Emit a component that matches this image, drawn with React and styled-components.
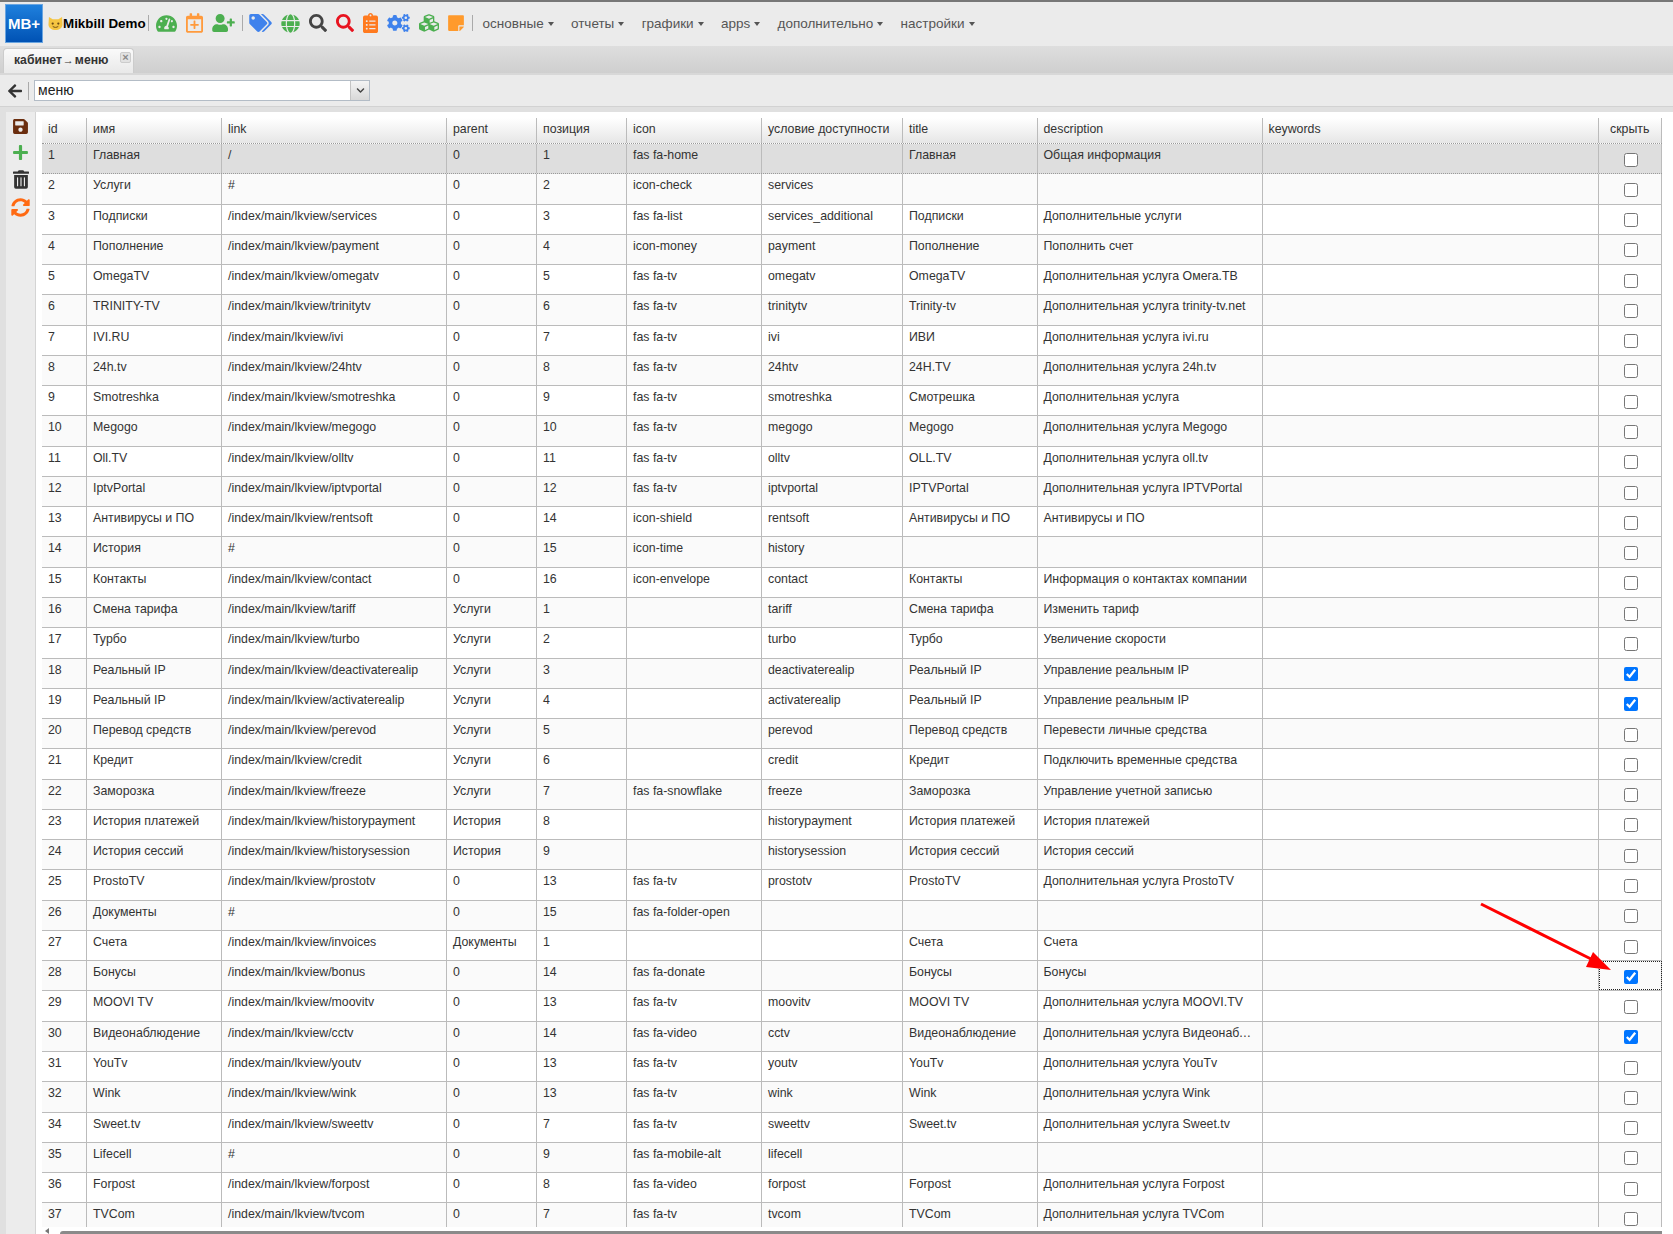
import styled, { createGlobalStyle } from 'styled-components';
import {
    FaArrowLeft,
    FaChevronDown,
    FaClipboardList,
    FaCogs,
    FaCubes,
    FaGlobe,
    FaPlus,
    FaRegCalendarPlus,
    FaSave,
    FaSearch,
    FaStickyNote,
    FaSyncAlt,
    FaTachometerAlt,
    FaTags,
    FaTrashAlt,
    FaUserPlus,
} from 'react-icons/fa';

const GlobalStyle = createGlobalStyle`
    html, body {
        margin: 0;
        padding: 0;
        height: 100%;
        overflow: hidden;
        background: #fff;
    }
    body {
        font-family: "Liberation Sans", Arial, sans-serif;
        font-size: 12.35px;
        color: #333;
    }
`;

const COLUMNS = '45px 135px 225px 90px 90px 135px 141px 134.5px 225px 336.5px 63px';

const Page = styled.div`
    position: relative;
    display: flex;
    flex-direction: column;
    height: 1234px;
    overflow: hidden;
`;

const TopBar = styled.div`
    display: flex;
    align-items: center;
    flex: none;
    box-sizing: border-box;
    height: 46px;
    padding: 0 0 2px 5px;
    background: #ebebeb;
    border-top: 2px solid #777;
`;

const Logo = styled.div`
    display: flex;
    align-items: center;
    justify-content: center;
    box-sizing: border-box;
    width: 38px;
    height: 39px;
    margin-right: 5px;
    background: linear-gradient(#1f80dd, #0052b4);
    border: 1px solid #6aa5e0;
    color: #fff;
    font-size: 15px;
    font-weight: bold;
`;

const Brand = styled.span`
    margin: 0 2px 0 0;
    color: #000;
    font-size: 13.4px;
    font-weight: bold;
    white-space: nowrap;
`;

const Separator = styled.span`
    flex: none;
    width: 1px;
    height: ${(p) => p.$height || 16}px;
    margin: 0 ${(p) => p.$gap || 0}px;
    background: #aaa;
`;

const IconGroup = styled.div`
    display: flex;
    align-items: center;
    gap: 9px;
    margin: 0 ${(p) => p.$right}px 0 ${(p) => p.$left}px;
`;

const BarIcon = styled.span`
    display: flex;
    flex: none;
    color: ${(p) => p.$color};
    svg {
        flex: none;
        width: ${(p) => p.$width}px;
        height: ${(p) => p.$height}px;
    }
`;

const Menu = styled.nav`
    display: flex;
    gap: 17.3px;
    margin-left: 10px;
`;

const MenuItem = styled.span`
    display: flex;
    align-items: center;
    gap: 4px;
    color: #555;
    font-size: 13.5px;
    &::after {
        content: '';
        border-top: 4px solid #555;
        border-left: 3px solid transparent;
        border-right: 3px solid transparent;
        margin-top: 2px;
    }
`;

const TabStrip = styled.div`
    display: flex;
    align-items: flex-end;
    flex: none;
    height: 27px;
    padding-left: 3px;
    background: linear-gradient(#dedede, #cfcfcf);
`;

const Tab = styled.div`
    position: relative;
    box-sizing: border-box;
    width: 131px;
    height: 25px;
    padding: 4px 0 0 10px;
    background: linear-gradient(#fafafa, #e9e9e9);
    border: 1px solid #ccc;
    border-bottom: 0;
    border-radius: 4px 4px 0 0;
    color: #333;
    font-size: 12.2px;
    font-weight: bold;
`;

const TabArrow = styled.span`
    margin: 0 1px;
    font-size: 11px;
    font-weight: normal;
`;

const TabClose = styled.span`
    position: absolute;
    top: 3px;
    right: 2px;
    display: flex;
    align-items: center;
    justify-content: center;
    box-sizing: border-box;
    width: 11px;
    height: 11px;
    background: #e2e2e2;
    border: 1px solid #ccc;
    border-radius: 2px;
    color: #888;
    font-size: 11px;
    line-height: 1;
`;

const Toolbar = styled.div`
    display: flex;
    align-items: center;
    flex: none;
    box-sizing: border-box;
    height: 34px;
    padding-left: 7px;
    background: #ebebeb;
    border-top: 2px solid #d8d8d8;
    border-bottom: 1px solid #d2d2d2;
`;

const Select = styled.div`
    display: flex;
    align-items: stretch;
    box-sizing: border-box;
    width: 336px;
    height: 21px;
    background: #fff;
    border: 1px solid #b3bcc6;
    font-size: 14px;
    color: #222;
`;

const SelectValue = styled.span`
    flex: 1;
    padding-left: 3px;
    line-height: 19px;
`;

const SelectButton = styled.span`
    display: flex;
    align-items: center;
    justify-content: center;
    width: 18px;
    background: linear-gradient(#f4f4f4, #d8d8d8);
    border-left: 1px solid #c4c4c4;
    color: #444;
    font-size: 9px;
`;

const Content = styled.div`
    display: flex;
    flex: 1;
    min-height: 0;
    padding-top: 5px;
    background: #e0e0e0;
`;

const SideBar = styled.aside`
    display: flex;
    flex-direction: column;
    align-items: center;
    flex: none;
    gap: 9px;
    box-sizing: border-box;
    width: 30px;
    margin-left: 6px;
    padding-top: 6px;
    background: #ececec;
    border-right: 1px solid #d4d4d4;
`;

const Panel = styled.main`
    display: flex;
    flex-direction: column;
    flex: 1;
    min-width: 0;
    padding: 6px 0 0 6px;
    background: #fff;
`;

const Grid = styled.div`
    flex: 1;
    min-height: 0;
    overflow: hidden;
`;

const HeaderRow = styled.div`
    display: grid;
    grid-template-columns: ${COLUMNS};
    box-sizing: border-box;
    height: 26px;
    background: linear-gradient(#fff, #e6e6e6);
    border-bottom: 1px dotted #999;
    width: 1620px;
`;

const HeaderCell = styled.div`
    box-sizing: border-box;
    padding: 4px 0 0 ${(p) => p.$pad || 6}px;
    border-right: 1px solid #bbb;
    line-height: 15px;
    color: #333;
    white-space: nowrap;
`;

const Row = styled.div`
    display: grid;
    grid-template-columns: ${COLUMNS};
    box-sizing: border-box;
    width: 1620px;
    height: 30.27px;
    background: ${(p) => (p.$selected ? '#dedede' : p.$even ? '#fafafa' : '#fff')};
    border-bottom: 1px ${(p) => (p.$selected ? 'dotted #999' : 'solid #bbb')};
`;

const Cell = styled.div`
    box-sizing: border-box;
    padding: 4px 4px 0 6px;
    border-right: 1px solid #bbb;
    line-height: 15px;
    color: #333;
    white-space: nowrap;
    overflow: hidden;
    text-overflow: ellipsis;
`;

const CheckCell = styled.div`
    display: flex;
    align-items: center;
    justify-content: center;
    box-sizing: border-box;
    padding-top: 2px;
    border-right: 1px solid #bbb;
    outline: ${(p) => (p.$focused ? '1px dotted #222' : 'none')};
    outline-offset: -1px;
`;

const HideBox = styled.input`
    width: 14px;
    height: 14px;
    margin: 0 0 0 1px;
`;

const ScrollTrack = styled.div`
    flex: none;
    position: relative;
    height: 7px;
    width: 1620px;
`;

const ScrollArrow = styled.span`
    position: absolute;
    left: 3px;
    bottom: 0;
    border-right: 4px solid #777;
    border-top: 3px solid transparent;
    border-bottom: 3px solid transparent;
`;

const ScrollThumb = styled.div`
    position: absolute;
    left: 18px;
    right: 0;
    bottom: 0;
    height: 3px;
    background: #8a8a8a;
    border-radius: 3px 0 0 0;
`;

const PointerArrow = styled.svg`
    position: absolute;
    left: 1470px;
    top: 895px;
    pointer-events: none;
`;

const headers = ['id', 'имя', 'link', 'parent', 'позиция', 'icon', 'условие доступности', 'title', 'description', 'keywords'];

const L = '/index/main/lkview/';
const E = '';
const DOP = 'Дополнительная услуга ';

const rows = [
    [1, 'Главная', '/', '0', '1', 'fas fa-home', E, 'Главная', 'Общая информация'],
    [2, 'Услуги', '#', '0', '2', 'icon-check', 'services', E, E],
    [3, 'Подписки', L + 'services', '0', '3', 'fas fa-list', 'services_additional', 'Подписки', 'Дополнительные услуги'],
    [4, 'Пополнение', L + 'payment', '0', '4', 'icon-money', 'payment', 'Пополнение', 'Пополнить счет'],
    [5, 'OmegaTV', L + 'omegatv', '0', '5', 'fas fa-tv', 'omegatv', 'OmegaTV', DOP + 'Омега.ТВ'],
    [6, 'TRINITY-TV', L + 'trinitytv', '0', '6', 'fas fa-tv', 'trinitytv', 'Trinity-tv', DOP + 'trinity-tv.net'],
    [7, 'IVI.RU', L + 'ivi', '0', '7', 'fas fa-tv', 'ivi', 'ИВИ', DOP + 'ivi.ru'],
    [8, '24h.tv', L + '24htv', '0', '8', 'fas fa-tv', '24htv', '24H.TV', DOP + '24h.tv'],
    [9, 'Smotreshka', L + 'smotreshka', '0', '9', 'fas fa-tv', 'smotreshka', 'Смотрешка', 'Дополнительная услуга'],
    [10, 'Megogo', L + 'megogo', '0', '10', 'fas fa-tv', 'megogo', 'Megogo', DOP + 'Megogo'],
    [11, 'Oll.TV', L + 'olltv', '0', '11', 'fas fa-tv', 'olltv', 'OLL.TV', DOP + 'oll.tv'],
    [12, 'IptvPortal', L + 'iptvportal', '0', '12', 'fas fa-tv', 'iptvportal', 'IPTVPortal', DOP + 'IPTVPortal'],
    [13, 'Антивирусы и ПО', L + 'rentsoft', '0', '14', 'icon-shield', 'rentsoft', 'Антивирусы и ПО', 'Антивирусы и ПО'],
    [14, 'История', '#', '0', '15', 'icon-time', 'history', E, E],
    [15, 'Контакты', L + 'contact', '0', '16', 'icon-envelope', 'contact', 'Контакты', 'Информация о контактах компании'],
    [16, 'Смена тарифа', L + 'tariff', 'Услуги', '1', E, 'tariff', 'Смена тарифа', 'Изменить тариф'],
    [17, 'Турбо', L + 'turbo', 'Услуги', '2', E, 'turbo', 'Турбо', 'Увеличение скорости'],
    [18, 'Реальный IP', L + 'deactivaterealip', 'Услуги', '3', E, 'deactivaterealip', 'Реальный IP', 'Управление реальным IP'],
    [19, 'Реальный IP', L + 'activaterealip', 'Услуги', '4', E, 'activaterealip', 'Реальный IP', 'Управление реальным IP'],
    [20, 'Перевод средств', L + 'perevod', 'Услуги', '5', E, 'perevod', 'Перевод средств', 'Перевести личные средства'],
    [21, 'Кредит', L + 'credit', 'Услуги', '6', E, 'credit', 'Кредит', 'Подключить временные средства'],
    [22, 'Заморозка', L + 'freeze', 'Услуги', '7', 'fas fa-snowflake', 'freeze', 'Заморозка', 'Управление учетной записью'],
    [23, 'История платежей', L + 'historypayment', 'История', '8', E, 'historypayment', 'История платежей', 'История платежей'],
    [24, 'История сессий', L + 'historysession', 'История', '9', E, 'historysession', 'История сессий', 'История сессий'],
    [25, 'ProstoTV', L + 'prostotv', '0', '13', 'fas fa-tv', 'prostotv', 'ProstoTV', DOP + 'ProstoTV'],
    [26, 'Документы', '#', '0', '15', 'fas fa-folder-open', E, E, E],
    [27, 'Счета', L + 'invoices', 'Документы', '1', E, E, 'Счета', 'Счета'],
    [28, 'Бонусы', L + 'bonus', '0', '14', 'fas fa-donate', E, 'Бонусы', 'Бонусы'],
    [29, 'MOOVI TV', L + 'moovitv', '0', '13', 'fas fa-tv', 'moovitv', 'MOOVI TV', DOP + 'MOOVI.TV'],
    [30, 'Видеонаблюдение', L + 'cctv', '0', '14', 'fas fa-video', 'cctv', 'Видеонаблюдение', DOP + 'Видеонаблюдение'],
    [31, 'YouTv', L + 'youtv', '0', '13', 'fas fa-tv', 'youtv', 'YouTv', DOP + 'YouTv'],
    [32, 'Wink', L + 'wink', '0', '13', 'fas fa-tv', 'wink', 'Wink', DOP + 'Wink'],
    [34, 'Sweet.tv', L + 'sweettv', '0', '7', 'fas fa-tv', 'sweettv', 'Sweet.tv', DOP + 'Sweet.tv'],
    [35, 'Lifecell', '#', '0', '9', 'fas fa-mobile-alt', 'lifecell', E, E],
    [36, 'Forpost', L + 'forpost', '0', '8', 'fas fa-video', 'forpost', 'Forpost', DOP + 'Forpost'],
    [37, 'TVCom', L + 'tvcom', '0', '7', 'fas fa-tv', 'tvcom', 'TVCom', DOP + 'TVCom'],
];

const hidden = [18, 19, 28, 30];

const CatFace = () => (
    <svg width='15' height='15' viewBox='0 0 16 16' style={{ flex: 'none' }}>
        <path d='M1 1l4 2.500h6L15 1l.5 8c0 3.500-3.500 6-7.500 6S.5 12.500.5 9z' fill='#f5c542' />
        <circle cx='5' cy='8' r='1.2' fill='#6b4a12' />
        <circle cx='11' cy='8' r='1.2' fill='#6b4a12' />
        <path d='M5 11c1.500 1.500 4.500 1.500 6 0' stroke='#6b4a12' strokeWidth='1' fill='none' />
    </svg>
);

const App = () => (
    <Page>
        <GlobalStyle />
        <TopBar>
            <Logo>MB+</Logo>
            <CatFace />
            <Brand>Mikbill Demo</Brand>
            <Separator />
            <IconGroup $left={7} $right={7}>
                <BarIcon $color='#4caf50' $width={21} $height={19}><FaTachometerAlt /></BarIcon>
                <BarIcon $color='#ff9a3c' $width={17} $height={20}><FaRegCalendarPlus /></BarIcon>
                <BarIcon $color='#4caf50' $width={23} $height={18}><FaUserPlus /></BarIcon>
            </IconGroup>
            <Separator />
            <IconGroup $left={6} $right={8}>
                <BarIcon $color='#3f82ec' $width={23} $height={18}><FaTags /></BarIcon>
                <BarIcon $color='#4caf50' $width={19} $height={19}><FaGlobe /></BarIcon>
                <BarIcon $color='#444' $width={18} $height={18}><FaSearch /></BarIcon>
                <BarIcon $color='#e8131f' $width={18} $height={18}><FaSearch /></BarIcon>
                <BarIcon $color='#ff7a1f' $width={15} $height={20}><FaClipboardList /></BarIcon>
                <BarIcon $color='#3f82ec' $width={23} $height={18}><FaCogs /></BarIcon>
                <BarIcon $color='#4caf50' $width={20} $height={20}><FaCubes /></BarIcon>
                <BarIcon $color='#ff9a2c' $width={16} $height={18}><FaStickyNote /></BarIcon>
            </IconGroup>
            <Separator />
            <Menu>
                <MenuItem>основные</MenuItem>
                <MenuItem>отчеты</MenuItem>
                <MenuItem>графики</MenuItem>
                <MenuItem>apps</MenuItem>
                <MenuItem>дополнительно</MenuItem>
                <MenuItem>настройки</MenuItem>
            </Menu>
        </TopBar>
        <TabStrip>
            <Tab>
                кабинет<TabArrow>→</TabArrow>меню
                <TabClose>×</TabClose>
            </Tab>
        </TabStrip>
        <Toolbar>
            <BarIcon $color='#333' $width={16} $height={16}><FaArrowLeft /></BarIcon>
            <Separator $gap={5} $height={18} />
            <Select>
                <SelectValue>меню</SelectValue>
                <SelectButton><FaChevronDown /></SelectButton>
            </Select>
        </Toolbar>
        <Content>
            <SideBar>
                <BarIcon $color='#6b2e0f' $width={17} $height={17}><FaSave /></BarIcon>
                <BarIcon $color='#4caf50' $width={17} $height={17}><FaPlus /></BarIcon>
                <BarIcon $color='#333' $width={16} $height={19}><FaTrashAlt /></BarIcon>
                <BarIcon $color='#ff6a13' $width={19} $height={19}><FaSyncAlt /></BarIcon>
            </SideBar>
            <Panel>
                <Grid>
                    <HeaderRow>
                        {headers.map((title) => (
                            <HeaderCell key={title}>{title}</HeaderCell>
                        ))}
                        <HeaderCell $pad={11}>скрыть</HeaderCell>
                    </HeaderRow>
                    {rows.map((row, index) => (
                        <Row key={row[0]} $selected={index === 0} $even={index % 2 === 1}>
                            {row.map((value, i) => (
                                <Cell key={i}>{value}</Cell>
                            ))}
                            <Cell />
                            <CheckCell $focused={row[0] === 28}>
                                <HideBox type='checkbox' readOnly checked={hidden.includes(row[0])} />
                            </CheckCell>
                        </Row>
                    ))}
                </Grid>
                <ScrollTrack>
                    <ScrollArrow />
                    <ScrollThumb />
                </ScrollTrack>
            </Panel>
        </Content>
        <PointerArrow width='160' height='90' viewBox='0 0 160 90'>
            <path d='M11 9L125 66' stroke='#f00' strokeWidth='3' fill='none' />
            <path d='M141 75L123 57L116 72z' fill='#f00' />
        </PointerArrow>
    </Page>
);

export default App;
